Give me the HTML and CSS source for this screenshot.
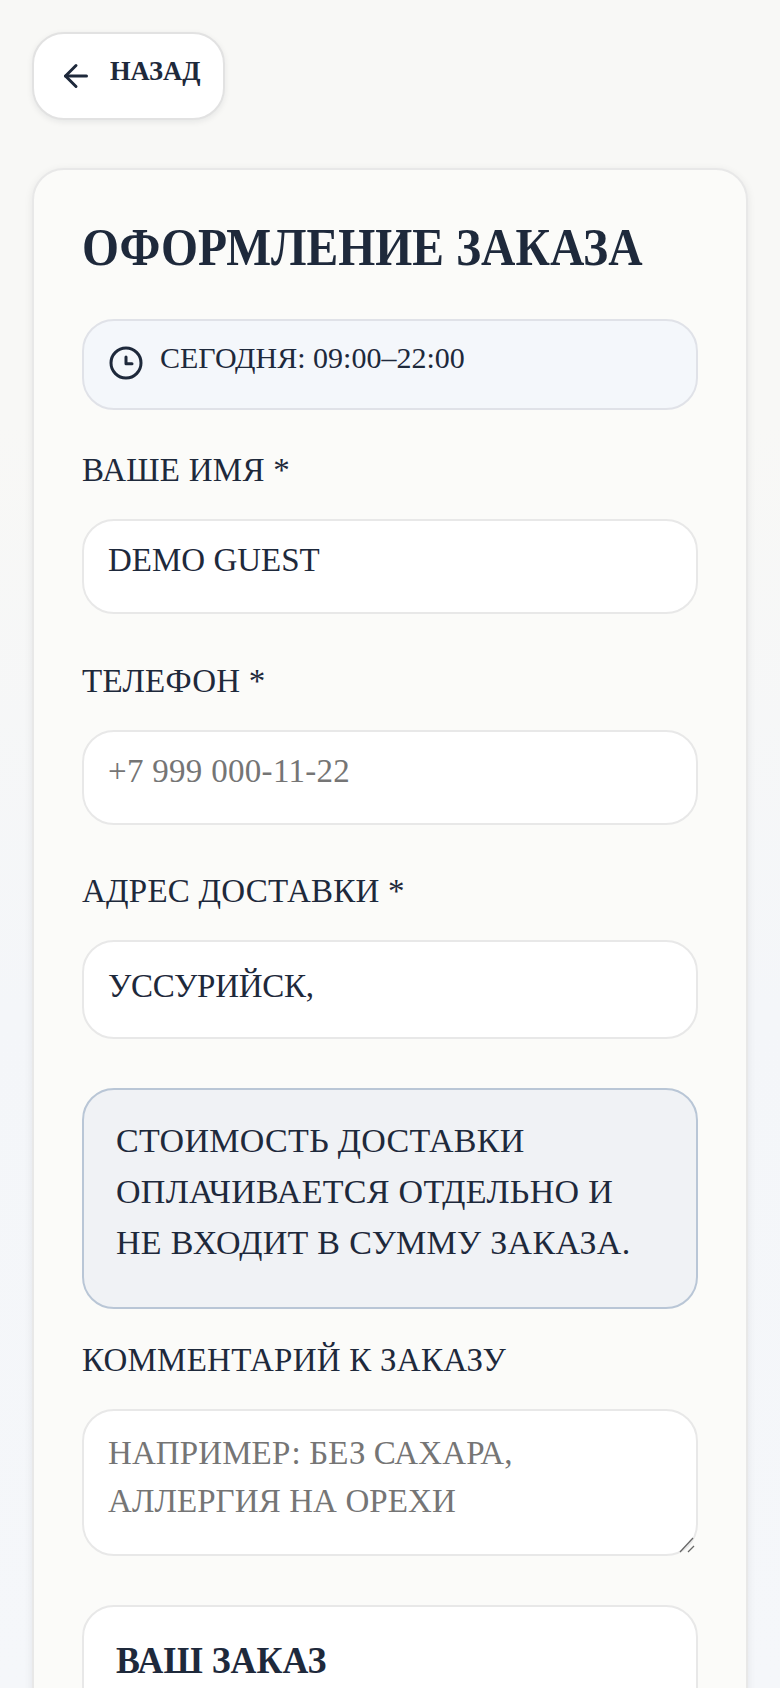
FILE: index.html
```html
<!DOCTYPE html>
<html lang="ru">

<head>
    <meta charset="UTF-8">
    <meta name="viewport" content="width=device-width, initial-scale=1.0">
    <title>Оформление заказа</title>
    <link rel="stylesheet" href="styles.css">
</head>

<body>

    <a class="back" href="#">
        <svg class="back-icon" viewBox="0 0 24 24" fill="none" stroke="currentColor" stroke-width="2" stroke-linecap="round" stroke-linejoin="round">
            <path d="M19 12H5"></path>
            <path d="M12 19l-7-7 7-7"></path>
        </svg>
        <span class="back-text">Назад</span>
    </a>

    <main class="card">
        <h1 class="title">Оформление заказа</h1>

        <div class="hours">
            <svg class="hours-icon" viewBox="0 0 24 24" fill="none" stroke="currentColor" stroke-width="2" stroke-linecap="round" stroke-linejoin="round">
                <circle cx="12" cy="12" r="10"></circle>
                <path d="M12 8v4.5h4"></path>
            </svg>
            <span class="hours-text">Сегодня: 09:00–22:00</span>
        </div>

        <label class="label" for="name">Ваше имя *</label>
        <input class="field" id="name" type="text" value="Demo Guest">

        <label class="label" for="phone">Телефон *</label>
        <input class="field field-phone" id="phone" type="text" placeholder="+7 999 000-11-22">

        <label class="label" for="address">Адрес доставки *</label>
        <input class="field field-address" id="address" type="text" value="Уссурийск,">

        <div class="note">Стоимость доставки оплачивается отдельно и не входит в сумму заказа.</div>

        <label class="label" for="comment">Комментарий к заказу</label>
        <div class="comment-box">
            <textarea class="field field-comment" id="comment" placeholder="Например: без сахара, аллергия на орехи"></textarea>
            <svg class="resize-grip" viewBox="0 0 16 16" fill="none" stroke="#666" stroke-width="1.3">
                <path d="M1 15L14 1"></path>
                <path d="M9 15l6-6"></path>
            </svg>
        </div>

        <section class="summary">
            <h2 class="summary-title">Ваш заказ</h2>
        </section>
    </main>

</body>

</html>
```

FILE: styles.css
```css
* {
    box-sizing: border-box;
}

body {
    margin: 0;
    height: 1688px;
    overflow: hidden;
    padding: 32px 32px 0;
    font-family: "Liberation Serif", serif;
    color: #1e293b;
    text-transform: uppercase;
    background: linear-gradient(180deg, #f8f8f6 0%, #f8f8f6 25%, #f4f6f9 60%, #f5f7fa 100%);
}

.back {
    display: flex;
    align-items: flex-start;
    width: 193px;
    height: 88px;
    padding: 22px 0 0 24px;
    gap: 16px;
    color: #1e293b;
    text-decoration: none;
    background: #fff;
    border: 2px solid #e2e2e2;
    border-radius: 32px;
    box-shadow: 0 2px 6px rgba(15, 23, 42, 0.08);
}

.back-icon {
    width: 36px;
    height: 36px;
    margin-top: 2px;
}

.back-text {
    font-size: 28px;
    font-weight: 700;
    line-height: 30px;
    transform: scaleX(0.947);
    transform-origin: left;
}

.card {
    margin-top: 48px;
    height: 1700px;
    padding: 46px 48px 0;
    background: #fbfbf9;
    border: 2px solid #e8e8e8;
    border-radius: 32px;
    box-shadow: 0 2px 8px rgba(15, 23, 42, 0.08);
}

.title {
    margin: 0 0 39px;
    font-size: 52px;
    line-height: 64px;
    font-weight: 700;
    white-space: nowrap;
    transform: scaleX(0.915);
    transform-origin: left;
}

.hours {
    display: flex;
    align-items: flex-start;
    gap: 16px;
    height: 91px;
    padding: 20px 24px 0;
    margin-bottom: 40px;
    background: #f4f7fb;
    border: 2px solid #e0e2e8;
    border-radius: 32px;
}

.hours-icon {
    flex: none;
    width: 36px;
    height: 36px;
    margin-top: 4px;
}

.hours-text {
    font-size: 30px;
    line-height: 34px;
}

.label {
    display: block;
    font-size: 33px;
    line-height: 40px;
    margin-bottom: 29px;
    letter-spacing: 0.25px;
}

.field {
    display: block;
    width: 100%;
    height: 95px;
    margin-bottom: 46.5px;
    padding: 0 24px 12px;
    font-family: inherit;
    font-size: 33px;
    color: inherit;
    text-transform: uppercase;
    background: #fff;
    border: 2px solid #e8e8e8;
    border-radius: 32px;
    outline: none;
}

.field-phone::placeholder {
    letter-spacing: 0.3px;
}

.field-address {
    height: 99px;
    margin-bottom: 49px;
    padding-bottom: 6px;
    letter-spacing: -0.3px;
}

.comment-box {
    position: relative;
    margin-bottom: 49px;
}

.field-comment {
    height: 147px;
    margin-bottom: 0;
    padding: 18px 24px 0;
    line-height: 48px;
    letter-spacing: 0.1px;
    resize: none;
}

.resize-grip {
    position: absolute;
    right: 3px;
    bottom: 3px;
    width: 16px;
    height: 16px;
}

.note {
    height: 221px;
    padding: 25px 32px 0;
    margin-bottom: 31px;
    font-size: 34px;
    line-height: 51px;
    letter-spacing: 0.3px;
    background: #f0f2f5;
    border: 2px solid #b9c6d6;
    border-radius: 32px;
}

.summary {
    height: 400px;
    padding: 31px 32px;
    background: #fff;
    border: 2px solid #e8e8e8;
    border-radius: 32px;
}

.summary-title {
    margin: 0;
    font-size: 38px;
    line-height: 44px;
    font-weight: 700;
    white-space: nowrap;
    transform: scaleX(0.942);
    transform-origin: left;
}
```
